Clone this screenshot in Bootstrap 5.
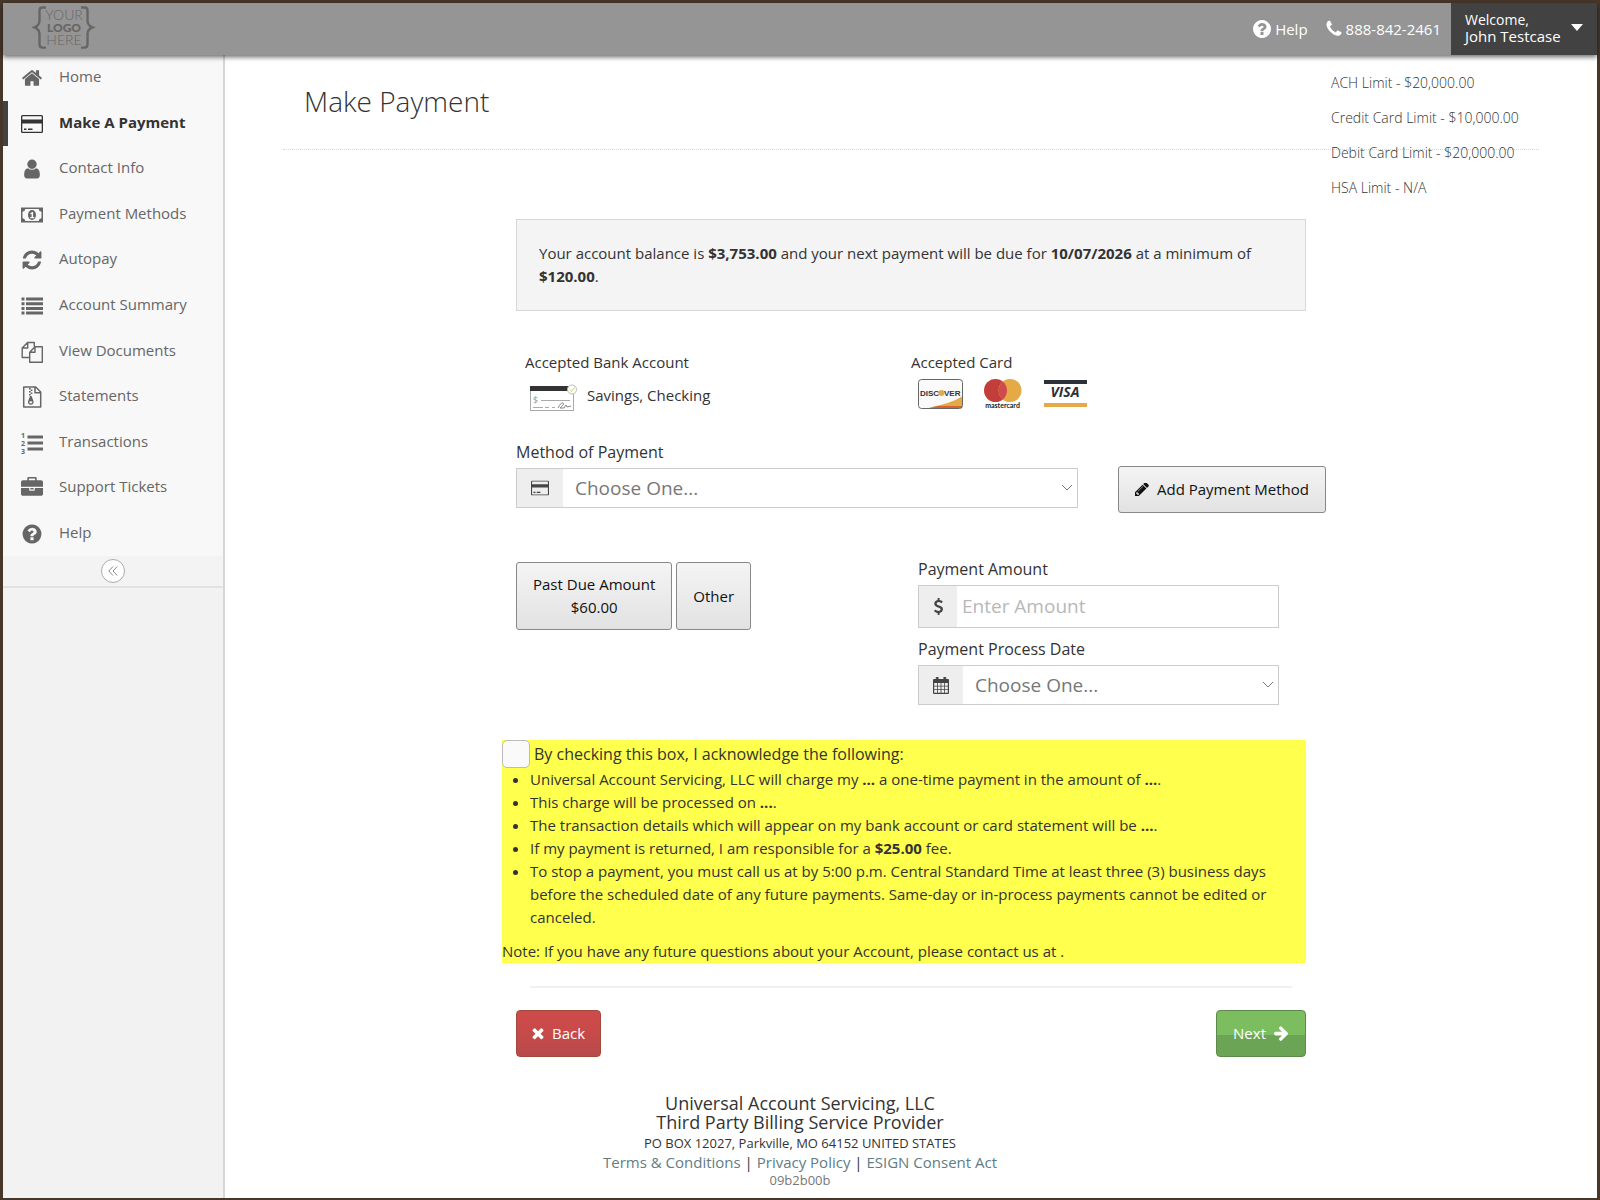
<!DOCTYPE html>
<html lang="en">
<head>
<meta charset="utf-8">
<meta name="viewport" content="width=device-width, initial-scale=1">
<title>Make Payment</title>
<link rel="stylesheet" href="https://cdn.jsdelivr.net/npm/bootstrap@5.3.0/dist/css/bootstrap.min.css">
<style>
  body { font-family: "Open Sans", "Noto Sans", sans-serif; font-size: 15px; line-height: 23px; color: #333; background: #fff; }
  .frame { min-height: 100vh; border: 3px solid #47372b; border-bottom-width: 2px; }
  .ico { fill: currentColor; flex: none; }
  /* header */
  .topbar { height: 52px; background: #959595; color: #fff; box-shadow: 0 2px 5px rgba(0,0,0,.6); position: relative; z-index: 2; }
  .topbar a { color: #fff; text-decoration: none; }
  .topbar nav { padding-right: 10px; gap: 18px; }
  .logo { margin-left: 29px; }
  .userbox { width: 146px; background: #424242; color: #fff; border: 0; padding: 0 14px 3px; line-height: 17px; text-align: left; }
  .userbox .hi { font-size: 14px; display: block; }
  /* sidebar */
  .side { width: 222px; flex: none; background: #f2f2f2; border-right: 2px solid #d6d6d6; }
  .side-nav { height: 501px; background: #f8f8f8; }
  .side-nav a { color: #666; text-decoration: none; padding-left: 18px; padding-bottom: 2px; gap: 16px; }
  .side-nav a svg { width: 22px; height: 22px; margin-top: 3px; }
  .side-nav .now a { color: #333; font-weight: 700; border-left: 5px solid #424242; padding-left: 13px; }
  .fold { height: 32px; background: #f3f3f3; border-bottom: 2px solid #e2e2e2; }
  .fold button { width: 24px; height: 24px; border: 1px solid #aaa; border-radius: 50%; background: #fff; color: #888; padding: 0; }
  /* page head */
  .page-head { margin: 0 58px; height: 95px; padding: 26px 21px 0; border-bottom: 1px dotted #d5d5d5; position: relative; }
  .page-head h1 { font-size: 28px; font-weight: 300; line-height: 40px; margin: 0; }
  .limits { position: absolute; top: 16px; left: 1048px; font-size: 14px; font-weight: 300; line-height: 23px; white-space: nowrap; }
  .limits li { margin-bottom: 12px; }
  /* form */
  .pay { max-width: 790px; margin: 69px auto 0; }
  .balance { background: #f4f4f4; border: 1px solid #d8d8d8; padding: 22px; margin-bottom: 40px; }
  .half { width: 386px; padding-left: 9px; }
  .types { height: 42px; }
  .pay label { font-size: 16px; line-height: 23px; }
  .pay .input-group { flex-wrap: nowrap; }
  .pay .input-group-text { background: #eee; border: 1px solid #ccc; border-radius: 0; color: #444; padding: 0; justify-content: center; }
  .pay .form-select, .pay .form-control { border: 1px solid #ccc; border-left: 0; border-radius: 0; font-size: 19px; line-height: 24px; color: #777; }
  .pay .form-select { height: 40px; padding: 7px 28px 7px 12px; background-color: #fff; background-position: right 4px center; background-size: 12px 12px;
    background-image: url("data:image/svg+xml,%3csvg xmlns='http://www.w3.org/2000/svg' viewBox='0 0 12 12'%3e%3cpath fill='none' stroke='%23777' d='m1 3 5 5 5-5'/%3e%3c/svg%3e"); }
  .pay .form-control { height: 43px; padding: 6px 5px 8px; }
  .pay .form-control::placeholder { color: #b8b8b8; }
  .w-method { width: 48px; } .w-usd { width: 40px; } .w-date { width: 46px; }
  .pay .lab-method { margin: 25px 0 2px; }
  .method { width: 562px; margin-top: 2px; }
  .btn-grey { background: linear-gradient(#f4f4f4, #e2e2e2); border: 1px solid #888; border-radius: 3px; color: #111; font-size: 15px; line-height: 23px; padding: 10px 16px; }
  .add-btn { margin-right: -20px; height: 47px; white-space: nowrap; }
  .row-amount { margin-top: 45px; }
  .amounts { height: 72px; padding-top: 4px; }
  .detail { width: 361px; margin-right: 27px; }
  .detail label { margin-bottom: 4px; }
  .detail .lab-date { margin-top: 10px; }
  .ack { background: #ffff4d; margin-left: -14px; margin-top: 35px; }
  .ack .form-check-input { width: 28px; height: 28px; margin: 0; border: 1px solid #bbb; border-radius: 5px; background-color: #fafafa; flex: none; }
  .ack ul { padding-left: 28px; margin-bottom: 11px; }
  .rule { height: 2px; background: #f0f0f0; margin: 23px 14px 22px; }
  .btn-back, .btn-next { height: 47px; border-radius: 4px; color: #fff; font-size: 15px; padding: 0 16px; }
  .btn-back { background: linear-gradient(#cf4b4b, #c94a4a 40%, #b84a4b); border: 1px solid #a04a3c; padding: 0 15px; }
  .btn-next { background: linear-gradient(#7cbd60 53%, #6ba454 54%); border: 1px solid #5c8a4a; }
  /* footer */
  .foot { padding-right: 222px; margin-top: 37px; text-align: center; font-size: 13px; line-height: 19px; }
  .foot .org { font-size: 18px; line-height: 19px; }
  .foot .addr { margin-top: 2px; }
  .foot .links { font-size: 15px; line-height: 18px; }
  .foot a { color: #607d84; text-decoration: none; }
  .foot .rev { color: #777; }
</style>
<script src="https://cdn.jsdelivr.net/npm/bootstrap@5.3.0/dist/js/bootstrap.bundle.min.js"></script>
</head>
<body>
<svg class="d-none" aria-hidden="true">
  <symbol id="i-q" viewBox="0 0 1792 1792"><path d="M1024 1376v-192q0-14-9-23t-23-9h-192q-14 0-23 9t-9 23v192q0 14 9 23t23 9h192q14 0 23-9t9-23zm256-672q0-88-55.500-163t-138.500-116-170-41q-243 0-371 213-15 24 8 42l132 100q7 6 19 6 16 0 25-12 53-68 86-92 34-24 86-24 48 0 85.500 26t37.500 59q0 38-20 61t-68 45q-63 28-115.500 86.500t-52.500 125.500v36q0 14 9 23t23 9h192q14 0 23-9t9-23q0-19 21.500-49.500t54.500-49.500q32-18 49-28.500t46-35 44.500-48 28-60.500 12.500-81zm384 192q0 209-103 385.500t-279.500 279.500-385.500 103-385.500-103-279.500-279.500-103-385.500 103-385.500 279.500-279.500 385.500-103 385.500 103 279.500 279.500 103 385.500z"/></symbol>
  <symbol id="i-card" viewBox="0 0 22 22"><path fill-rule="evenodd" d="M1.500 2h19A1.500 1.500 0 0 1 22 3.500v15a1.500 1.500 0 0 1-1.500 1.500h-19A1.500 1.500 0 0 1 0 18.500v-15A1.500 1.500 0 0 1 1.500 2zM1.300 3.700v2.800h19.400V3.700q0-.5-.5-.5H1.800q-.5 0-.5.500zm0 6.800v7.800q0 .5.500.5h18.400q.5 0 .5-.5v-7.800zM3 15.500h2.500v1.500H3zm4 0h4.500v1.500H7z"/></symbol>
</svg>
<div class="frame d-flex flex-column">
  <header class="topbar d-flex align-items-stretch">
    <a class="logo" href="#" aria-label="Your logo here">
      <svg width="64" height="48" viewBox="0 0 64 48" font-family="Lato, sans-serif" fill="#666">
        <path d="M14 4.500h-3.500q-3 0-3 3v10q0 5-5 6.800 5 1.800 5 6.800v10.500q0 3 3 3H14M49 4.500h3.500q3 0 3 3v10q0 5 5 6.800-5 1.800-5 6.800v10.500q0 3-3 3H49" fill="none" stroke="#666" stroke-width="2.400"/>
        <text x="32" y="17" text-anchor="middle" font-size="14" font-weight="300">YOUR</text>
        <text x="32" y="29" text-anchor="middle" font-size="12" font-weight="900">LOGO</text>
        <text x="32" y="42" text-anchor="middle" font-size="14" font-weight="300">HERE</text>
      </svg>
    </a>
    <nav class="ms-auto d-flex align-items-center">
      <a href="#" class="d-flex align-items-center gap-1"><svg class="ico" width="18" height="18" viewBox="128 128 1536 1536"><use href="#i-q" width="1792" height="1792"/></svg>Help</a>
      <a href="#" class="d-flex align-items-center gap-1"><svg class="ico" width="16" height="20" viewBox="150 150 1500 1500"><path d="M1600 1240q0 27-10 70.500t-21 68.500q-21 50-122 106-94 51-186 51-27 0-53-3.500t-57.500-12.500-47-14.500-55.500-20.500-49-18q-98-35-175-83-127-79-264-216t-216-264q-48-77-83-175-3-9-18-49t-20.500-55.500-14.500-47-12.500-57.500-3.500-53q0-92 51-186 56-101 106-122 25-11 68.500-21t70.500-10q14 0 21 3 18 6 53 76 11 19 30 54t35 63.500 31 53.500q3 4 17.500 25t21.500 35.500 7 28.500q0 20-28.500 50t-62 55-62 53-28.500 46q0 9 5 22.500t8.500 20.500 14 24 11.500 19q76 137 174 235t235 174q2 1 19 11.500t24 14 20.500 8.500 22.500 5q18 0 46-28.500t53-62 55-62 50-28.500q14 0 28.500 7t35.500 21.500 25 17.500q25 15 53.500 31t63.500 35 54 30q70 35 76 53 3 7 3 21z"/></svg>888-842-2461</a>
    </nav>
    <button type="button" class="userbox d-flex align-items-center justify-content-between">
      <span><span class="hi">Welcome,</span>John Testcase</span>
      <svg class="ico" width="12" height="7" viewBox="0 0 12 7"><path d="M0 0h12L6 7z"/></svg>
    </button>
  </header>

  <div class="d-flex flex-fill">
    <aside class="side">
      <ul class="side-nav list-unstyled d-flex flex-column mb-0">
        <li class="flex-fill d-flex"><a class="d-flex align-items-center flex-fill" href="#"><svg class="ico" viewBox="0 0 1792 1792"><path d="M1472 992v480q0 26-19 45t-45 19h-384v-384h-256v384h-384q-26 0-45-19t-19-45v-480q0-1 .5-3t.5-3l575-474 575 474q1 2 1 6zm223-69l-62 74q-8 9-21 11h-3q-13 0-21-7l-692-577-692 577q-12 8-24 7-13-2-21-11l-62-74q-8-10-7-23.500t11-21.500l719-599q32-26 76-26t76 26l244 204v-195q0-14 9-23t23-9h192q14 0 23 9t9 23v408l219 182q10 8 11 21.500t-7 23.500z"/></svg>Home</a></li>
        <li class="flex-fill d-flex now"><a class="d-flex align-items-center flex-fill" href="#" aria-current="page"><svg class="ico"><use href="#i-card"/></svg>Make A Payment</a></li>
        <li class="flex-fill d-flex"><a class="d-flex align-items-center flex-fill" href="#"><svg class="ico" viewBox="0 0 1792 1792"><path d="M1536 1399q0 109-62.500 187t-150.500 78h-854q-88 0-150.500-78t-62.500-187q0-85 8.500-160.500t31.500-152 58.500-131 94-89 134.500-34.500q131 128 313 128t313-128q76 0 134.500 34.500t94 89 58.500 131 31.500 152 8.500 160.500zm-256-887q0 159-112.500 271.500t-271.500 112.500-271.500-112.500-112.500-271.500 112.500-271.500 271.500-112.500 271.500 112.500 112.500 271.500z"/></svg>Contact Info</a></li>
        <li class="flex-fill d-flex"><a class="d-flex align-items-center flex-fill" href="#"><svg class="ico" viewBox="0 0 22 22"><path fill-rule="evenodd" d="M0 3.500h22v15H0zM4.300 5a3 3 0 0 1-2.800 2.800v6.400A3 3 0 0 1 4.300 17h13.400a3 3 0 0 1 2.800-2.800V7.800A3 3 0 0 1 17.700 5z"/><ellipse cx="11" cy="11" rx="4" ry="5"/><path d="M9.200 9.600 11 8h1.100v5h1.200v1.200H9.200V13h1.400V9.700l-.9.700z" fill="#f8f8f8"/></svg>Payment Methods</a></li>
        <li class="flex-fill d-flex"><a class="d-flex align-items-center flex-fill" href="#"><svg class="ico" viewBox="0 0 1792 1792"><path d="M1639 1056q0 5-1 7-64 268-268 434.500t-478 166.500q-146 0-282.500-55t-243.500-157l-129 129q-19 19-45 19t-45-19-19-45v-448q0-26 19-45t45-19h448q26 0 45 19t19 45-19 45l-137 137q71 66 161 102t187 36q134 0 250-65t186-179q11-17 53-117 8-23 30-23h192q13 0 22.500 9.500t9.500 22.500zm25-800v448q0 26-19 45t-45 19h-448q-26 0-45-19t-19-45 19-45l138-138q-148-137-349-137-134 0-250 65t-186 179q-11 17-53 117-8 23-30 23h-199q-13 0-22.500-9.500t-9.500-22.500v-7q65-268 270-434.500t480-166.500q146 0 284 55.500t245 156.500l130-129q19-19 45-19t45 19 19 45z"/></svg>Autopay</a></li>
        <li class="flex-fill d-flex"><a class="d-flex align-items-center flex-fill" href="#"><svg class="ico" viewBox="0 0 22 22"><path d="M.500 2.500h3v3h-3zm4.500 0h17v3H5zM.500 7.200h3v3h-3zm4.500 0h17v3H5zM.500 11.900h3v3h-3zm4.500 0h17v3H5zM.500 16.600h3v3h-3zm4.500 0h17v3H5z"/></svg>Account Summary</a></li>
        <li class="flex-fill d-flex"><a class="d-flex align-items-center flex-fill" href="#"><svg class="ico" viewBox="0 0 22 22"><path d="M8 16.500H1.200V7L6.500 1.500h6.800v4M6.700 1.500V7H1.200M8.700 11.300l5.300-5.500h7.300v15.400H8.700zM14 6v5.300H8.700" fill="none" stroke="currentColor" stroke-width="1.400" stroke-linejoin="round"/></svg>View Documents</a></li>
        <li class="flex-fill d-flex"><a class="d-flex align-items-center flex-fill" href="#"><svg class="ico" viewBox="0 0 22 22"><path d="M2.700 1h12l5 5v15h-17zM14 1v5.700h5.700" fill="none" stroke="currentColor" stroke-width="1.500" stroke-linejoin="round"/><path d="M8 2h1.700v1.500H8zm1.700 1.500h1.700V5H9.700zM8 5h1.700v1.500H8zm1.700 1.500h1.700V8H9.700zM8 8h1.700v1.500H8zM9 10h1.600l2 5.500q.4 3-2.800 3.200-3.200-.2-2.800-3.200zm.8 5.200q-1.600 0-1.600 1.100t1.600 1.100 1.600-1.100-1.600-1.100z" fill-rule="evenodd"/></svg>Statements</a></li>
        <li class="flex-fill d-flex"><a class="d-flex align-items-center flex-fill" href="#"><svg class="ico overflow-visible" viewBox="0 0 22 22"><path d="M6.500 3.500H22v3H6.500zm0 6H22v3H6.500zm0 6H22v3H6.500z"/><g font-size="7" font-weight="700" font-family="Open Sans, sans-serif"><text x="0" y="6">1</text><text x="0" y="14">2</text><text x="0" y="22">3</text></g></svg>Transactions</a></li>
        <li class="flex-fill d-flex"><a class="d-flex align-items-center flex-fill" href="#"><svg class="ico" viewBox="0 0 1792 1792"><path d="M640 256h512v-128h-512v128zm1152 640v480q0 66-47 113t-113 47h-1472q-66 0-113-47t-47-113v-480h672v160q0 26 19 45t45 19h320q26 0 45-19t19-45v-160h672zm-768 0v128h-256v-128h256zm768-480v384h-1792v-384q0-66 47-113t113-47h352v-160q0-40 28-68t68-28h576q40 0 68 28t28 68v160h352q66 0 113 47t47 113z"/></svg>Support Tickets</a></li>
        <li class="flex-fill d-flex"><a class="d-flex align-items-center flex-fill" href="#"><svg class="ico"><use href="#i-q"/></svg>Help</a></li>
      </ul>
      <div class="fold d-flex align-items-center justify-content-center">
        <button type="button" class="d-flex align-items-center justify-content-center" aria-label="Collapse menu"><svg width="10" height="10" viewBox="0 0 10 10"><path d="M5 .500.800 5 5 9.500M9.200.500 5 5l4.200 4.500" fill="none" stroke="currentColor"/></svg></button>
      </div>
    </aside>

    <main class="flex-fill">
      <div class="page-head">
        <h1>Make Payment</h1>
        <ul class="limits list-unstyled mb-0">
          <li>ACH Limit - $20,000.00</li>
          <li>Credit Card Limit - $10,000.00</li>
          <li>Debit Card Limit - $20,000.00</li>
          <li>HSA Limit - N/A</li>
        </ul>
      </div>

      <form class="pay">
        <div class="balance">Your account balance is <b>$3,753.00</b> and your next payment will be due for <b>10/07/2026</b> at a minimum of <b>$120.00</b>.</div>

        <div class="d-flex">
          <div class="half">
            <div>Accepted Bank Account</div>
            <div class="types d-flex align-items-center">
              <svg class="ms-1 mt-1" width="50" height="30" viewBox="0 0 50 30">
                <rect x="1.500" y="4.500" width="43" height="24" fill="#fff" stroke="#aaa"/>
                <path d="M1 4h43v5H1z" fill="#333"/>
                <path d="M12 18.500h29M4 25.500h10m2 0h4m3 0h3" stroke="#aaa" fill="none"/>
                <path d="M29 26q3-6 5-5t-3 5h4l2-3 1 2 4-1" stroke="#888" fill="none"/>
                <text x="4" y="21" font-size="9" fill="#999">$</text>
                <circle cx="43" cy="7.500" r="4.500" fill="#fff" stroke="#bbb"/>
                <path d="m41 7.500 1.500 2 3-4" stroke="#d8d060" fill="none"/>
              </svg>
              <span class="ps-2">Savings, Checking</span>
            </div>
          </div>
          <div class="half">
            <div>Accepted Card</div>
            <div class="d-flex">
              <svg width="176" height="36" viewBox="0 0 176 36" role="img" aria-label="Discover, Mastercard, Visa" font-family="Liberation Sans, sans-serif">
                <rect x="7" y="5" width="45" height="29" rx="3" fill="#fafafa"/>
                <path d="M18 33.500q22-4 33-11v11z" fill="#e5a945"/><path d="M18 34q6-1 9-2h24v2z" fill="#d8632f"/>
                <rect x="7.500" y="5.500" width="44" height="29" rx="3" fill="none" stroke="#666"/>
                <text x="28" y="22" text-anchor="end" font-size="8" font-weight="700" fill="#333">DISC</text><circle cx="30.500" cy="19" r="3" fill="#e5a945"/><text x="33" y="22" font-size="8" font-weight="700" fill="#333">VER</text>
                <circle cx="84.500" cy="16.500" r="11.500" fill="#c33d3a"/><circle cx="99" cy="16.500" r="11.500" fill="#e5a945"/>
                <path d="M91.800 7.600a11.500 11.500 0 0 1 0 17.800 11.500 11.500 0 0 1 0-17.800z" fill="#cf4b4b"/>
                <text x="91.500" y="34" text-anchor="middle" font-size="7" font-weight="700" font-family="Lato, sans-serif" fill="#222">mastercard</text>
                <path d="M133 6h43v4h-43z" fill="#2c3038"/><path d="M133 29h43v4h-43z" fill="#e5a945"/>
                <text x="154" y="23" text-anchor="middle" font-size="14" font-weight="700" font-style="italic" font-family="Open Sans, sans-serif" fill="#2c3038">VISA</text>
              </svg>
            </div>
          </div>
        </div>

        <label for="method" class="d-block lab-method">Method of Payment</label>
        <div class="d-flex align-items-start justify-content-between">
          <div class="input-group method">
            <span class="input-group-text w-method"><svg class="ico" width="18" height="18"><use href="#i-card"/></svg></span>
            <select id="method" class="form-select"><option>Choose One...</option></select>
          </div>
          <button type="button" class="btn btn-grey add-btn d-flex align-items-center gap-2"><svg class="ico" width="14" height="14" viewBox="128 230 1536 1536"><path d="M491 1536l91-91-235-235-91 91v107h128v128h107zm523-928q0-22-22-22-10 0-17 7l-542 542q-7 7-7 17 0 22 22 22 10 0 17-7l542-542q7-7 7-17zm-54-192l416 416-832 832h-416v-416zm683 96q0 53-37 90l-166 166-416-416 166-165q36-38 90-38 53 0 91 38l235 234q37 39 37 91z"/></svg>Add Payment Method</button>
        </div>

        <div class="row-amount d-flex justify-content-between">
          <div class="amounts d-flex gap-1">
            <button type="button" class="btn btn-grey">Past Due Amount<br>$60.00</button>
            <button type="button" class="btn btn-grey">Other</button>
          </div>
          <div class="detail">
            <label for="amount" class="d-block">Payment Amount</label>
            <div class="input-group">
              <span class="input-group-text w-usd"><svg class="ico" width="17" height="17" viewBox="0 0 1792 1792"><path d="M1362 1185q0 153-99.500 263.500t-258.500 136.500v175q0 14-9 23t-23 9h-135q-13 0-22.500-9.500t-9.500-22.500v-175q-66-9-127.500-31t-101.500-44.500-74-48-46.500-37.500-17.500-18q-17-21-2-41l103-135q7-10 23-12 15-2 24 9l2 2q113 99 243 125 37 8 74 8 81 0 142.500-43t61.500-122q0-28-15-53t-33.500-42-58.500-37.500-66-32-80-32.500q-39-16-61.500-25t-61.500-26.500-62.500-31-56.500-35.500-53.500-42.500-43.500-49-35.500-58-21-66.500-8.500-78q0-138 98-242t255-134v-180q0-13 9.500-22.500t22.500-9.500h135q14 0 23 9t9 23v176q57 6 110.500 23t87 33.500 63.500 37.500 39 29 15 14q17 18 5 38l-81 146q-8 15-23 16-14 3-27-7-3-3-14.500-12t-39-26.500-58.500-32-74.500-26-85.500-11.500q-95 0-155 43t-60 111q0 26 8.500 48t29.500 41.500 39.500 33 56 31 60.500 27 70 27.500q53 20 81 31.500t76 35 75.500 42.500 62 50 53 63.500 31.500 76.500 13 94z"/></svg></span>
              <input id="amount" type="text" class="form-control" placeholder="Enter Amount">
            </div>
            <label for="pdate" class="d-block lab-date">Payment Process Date</label>
            <div class="input-group">
              <span class="input-group-text w-date"><svg class="ico" width="16" height="17" viewBox="0 0 16 17"><path fill-rule="evenodd" d="M1 2h14q1 0 1 1v13q0 1-1 1H1q-1 0-1-1V3q0-1 1-1zm.200 4v2.800h2.900V6zm3.700 0v2.800h2.700V6zm3.500 0v2.800h2.700V6zm3.500 0v2.800h2.900V6zM1.200 9.600v2.700h2.900V9.600zm3.700 0v2.700h2.700V9.600zm3.500 0v2.700h2.700V9.600zm3.500 0v2.700h2.900V9.600zM1.200 13.100v2.700h2.900v-2.700zm3.700 0v2.700h2.700v-2.700zm3.500 0v2.700h2.700v-2.700zm3.500 0v2.700h2.900v-2.700z"/><path d="M3.200 0h2v4h-2zm7.600 0h2v4h-2z" stroke="#444" stroke-width=".6"/></svg></span>
              <select id="pdate" class="form-select"><option>Choose One...</option></select>
            </div>
          </div>
        </div>

        <div class="ack">
          <div class="d-flex align-items-center gap-1">
            <input id="ack" type="checkbox" class="form-check-input">
            <label for="ack">By checking this box, I acknowledge the following:</label>
          </div>
          <ul>
            <li>Universal Account Servicing, LLC will charge my <b>...</b> a one-time payment in the amount of <b>...</b>.</li>
            <li>This charge will be processed on <b>...</b>.</li>
            <li>The transaction details which will appear on my bank account or card statement will be <b>...</b>.</li>
            <li>If my payment is returned, I am responsible for a <b>$25.00</b> fee.</li>
            <li>To stop a payment, you must call us at by 5:00 p.m. Central Standard Time at least three (3) business days before the scheduled date of any future payments. Same-day or in-process payments cannot be edited or canceled.</li>
          </ul>
          <div>Note: If you have any future questions about your Account, please contact us at .</div>
        </div>

        <div class="rule"></div>
        <div class="d-flex justify-content-between">
          <button type="button" class="btn btn-back d-flex align-items-center gap-2"><svg class="ico" width="12" height="12" viewBox="250 350 1290 1290"><path d="M1490 1322q0 40-28 68l-136 136q-28 28-68 28t-68-28l-294-294-294 294q-28 28-68 28t-68-28l-136-136q-28-28-28-68t28-68l294-294-294-294q-28-28-28-68t28-68l136-136q28-28 68-28t68 28l294 294 294-294q28-28 68-28t68 28l136 136q28 28 28 68t-28 68l-294 294 294 294q28 28 28 68z"/></svg>Back</button>
          <button type="submit" class="btn btn-next d-flex align-items-center gap-2">Next<svg class="ico" width="15" height="15" viewBox="150 150 1500 1600"><path d="M1600 960q0 54-37 91l-651 651q-39 37-91 37-51 0-90-37l-75-75q-38-38-38-91t38-91l293-293h-704q-52 0-84.500-37.500t-32.500-90.500v-128q0-53 32.500-90.500t84.500-37.500h704l-293-294q-38-36-38-90t38-90l75-75q38-38 90-38 53 0 91 38l651 651q37 35 37 90z"/></svg></button>
        </div>
      </form>

      <footer class="foot">
        <div class="org">Universal Account Servicing, LLC</div>
        <div class="org">Third Party Billing Service Provider</div>
        <div class="addr">PO BOX 12027, Parkville, MO 64152 UNITED STATES</div>
        <div class="links"><a href="#">Terms &amp; Conditions</a> | <a href="#">Privacy Policy</a> | <a href="#">ESIGN Consent Act</a></div>
        <div class="rev">09b2b00b</div>
      </footer>
    </main>
  </div>
</div>
</body>
</html>
